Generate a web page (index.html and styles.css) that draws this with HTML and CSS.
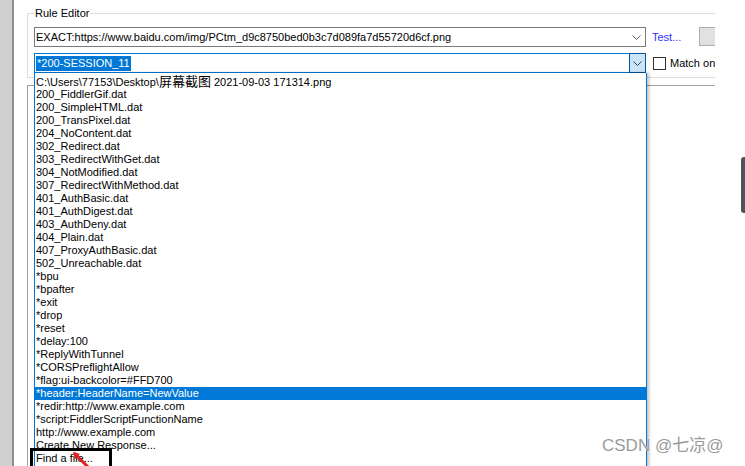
FILE: index.html
```html
<!DOCTYPE html>
<html lang="en">
<head>
  <meta charset="UTF-8">
  <title>Rule Editor</title>
  <link rel="stylesheet" href="styles.css">
</head>
<body>
<div class="window">
  <div class="sidebar"></div>

  <div class="main">
    <div class="clip">
      <fieldset class="rule-editor">
        <legend>Rule Editor</legend>
        <div class="row">
          <div class="combo">
            <span class="combo-text">EXACT:https://www.baidu.com/img/PCtm_d9c8750bed0b3c7d089fa7d55720d6cf.png</span>
            <svg class="chevron" width="9" height="5" viewBox="0 0 9 5"><path d="M0.5 0.5 L4.5 4.5 L8.5 0.5" fill="none" stroke="#606060"/></svg>
          </div>
          <a class="test-link" href="#">Test...</a>
          <button class="save-button"></button>
        </div>
        <div class="row">
          <div class="combo active">
            <span class="combo-text"><span class="selected-text">*200-SESSION_11</span></span>
            <span class="drop-button">
              <svg class="chevron" width="9" height="5" viewBox="0 0 9 5"><path d="M0.5 0.5 L4.5 4.5 L8.5 0.5" fill="none" stroke="#404040"/></svg>
            </span>
          </div>
          <label class="match-option"><span class="checkbox"></span>Match on</label>
        </div>
      </fieldset>
      <div class="panel"></div>
    </div>

    <div class="dropdown">
      <div class="item">C:\Users\77153\Desktop\<span class="cjk">屏幕截图</span> 2021-09-03 171314.png</div>
      <div class="item">200_FiddlerGif.dat</div>
      <div class="item">200_SimpleHTML.dat</div>
      <div class="item">200_TransPixel.dat</div>
      <div class="item">204_NoContent.dat</div>
      <div class="item">302_Redirect.dat</div>
      <div class="item">303_RedirectWithGet.dat</div>
      <div class="item">304_NotModified.dat</div>
      <div class="item">307_RedirectWithMethod.dat</div>
      <div class="item">401_AuthBasic.dat</div>
      <div class="item">401_AuthDigest.dat</div>
      <div class="item">403_AuthDeny.dat</div>
      <div class="item">404_Plain.dat</div>
      <div class="item">407_ProxyAuthBasic.dat</div>
      <div class="item">502_Unreachable.dat</div>
      <div class="item">*bpu</div>
      <div class="item">*bpafter</div>
      <div class="item">*exit</div>
      <div class="item">*drop</div>
      <div class="item">*reset</div>
      <div class="item">*delay:100</div>
      <div class="item">*ReplyWithTunnel</div>
      <div class="item">*CORSPreflightAllow</div>
      <div class="item">*flag:ui-backcolor=#FFD700</div>
      <div class="item selected">*header:HeaderName=NewValue</div>
      <div class="item">*redir:http://www.example.com</div>
      <div class="item">*script:FiddlerScriptFunctionName</div>
      <div class="item">http://www.example.com</div>
      <div class="item">Create New Response...</div>
      <div class="item">Find a file...</div>
    </div>

    <!-- annotation drawn on the screenshot -->
    <div class="highlight-box"></div>
    <svg class="arrow" width="20" height="18" viewBox="0 0 20 18">
      <path d="M2 2 L16 16" stroke="#e0201b" stroke-width="3" fill="none"/>
      <path d="M1 1 L8 3 L3 8 Z" fill="#e0201b"/>
    </svg>
  </div>

  <div class="scroll-thumb"></div>
  <div class="watermark">CSDN @七凉@</div>
</div>
</body>
</html>
```

FILE: styles.css
```css
body {
  margin: 0;
  font-family: 'Liberation Sans', 'Noto Sans CJK SC', sans-serif;
  font-size: 11px;
  color: #000;
  background: #fff;
}

.window {
  position: relative;
  width: 745px;
  height: 466px;
  display: flex;
  overflow: hidden;
  background: #fff;
}

.sidebar {
  width: 12px;
  background: #d0d0d0;
  border-right: 2px solid #8e8e8e;
}

.main {
  position: relative;
  flex: 1;
  padding-left: 13px;
}

.clip {
  width: 688px;
  height: 100%;
  overflow: hidden;
  display: flex;
  flex-direction: column;
}

.rule-editor {
  margin: 6px 0 0 0;
  width: 760px;
  padding: 7px 6px 4px 6px;
  border: 1px solid #dcdcdc;
  border-right: none;
}

.rule-editor legend {
  padding: 0 1px;
  line-height: 14px;
  color: #000;
}

.row {
  display: flex;
  align-items: center;
  height: 20px;
}

.row + .row {
  margin-top: 6px;
}

.combo {
  position: relative;
  box-sizing: border-box;
  width: 612px;
  height: 20px;
  border: 1px solid #7a7a7a;
  display: flex;
  align-items: center;
  background: #fff;
}

.combo-text {
  flex: 1;
  padding-left: 1px;
  white-space: nowrap;
}

.combo > .chevron {
  margin-right: 4px;
}

.combo.active {
  border-color: #0078d7;
}

.selected-text {
  display: inline-block;
  background: #0078d7;
  color: #fff;
  line-height: 15px;
  padding: 0 1px;
}

.drop-button {
  box-sizing: border-box;
  width: 17px;
  height: 20px;
  margin: -1px -1px -1px 0;
  border: 1px solid #005499;
  background: #cce4f7;
  display: flex;
  align-items: center;
  justify-content: center;
}

.test-link {
  margin-left: 6px;
  color: #3030ff;
  text-decoration: none;
}

.save-button {
  margin-left: 18px;
  width: 40px;
  height: 19px;
  background: #e1e1e1;
  border: 1px solid #adadad;
  margin-top: -1px;
}

.match-option {
  display: flex;
  align-items: center;
  margin-left: 7px;
  white-space: nowrap;
}

.checkbox {
  box-sizing: border-box;
  width: 13px;
  height: 13px;
  border: 1px solid #333;
  margin-right: 4px;
  background: #fff;
}

.panel {
  flex: 1;
  margin-top: 7px;
  border-top: 1px solid #a0a0a0;
  border-left: 1px solid #a0a0a0;
}

.dropdown {
  position: absolute;
  top: 73px;
  left: 20px;
  box-sizing: border-box;
  width: 613px;
  height: 400px;
  padding-top: 2px;
  background: #fff;
  border: 1px solid #0078d7;
  border-top: none;
  box-shadow: 2px 0 3px rgba(0, 0, 0, 0.25);
}

.item {
  height: 13px;
  line-height: 13px;
  padding-left: 1px;
  white-space: nowrap;
}

.item .cjk {
  font-size: 13px;
}

.item.selected {
  background: #0078d7;
  color: #fff;
}

.highlight-box {
  position: absolute;
  left: 16px;
  top: 448px;
  width: 76px;
  height: 20px;
  border: 3px solid #000;
}

.arrow {
  position: absolute;
  left: 58px;
  top: 451px;
}

.scroll-thumb {
  position: absolute;
  left: 741px;
  top: 157px;
  width: 8px;
  height: 56px;
  border-radius: 3px;
  background: #4f535c;
}

.watermark {
  position: absolute;
  left: 602px;
  top: 431px;
  font-size: 17px;
  color: #9a9a9a;
  text-shadow: 0 0 1px #fff;
}
```
